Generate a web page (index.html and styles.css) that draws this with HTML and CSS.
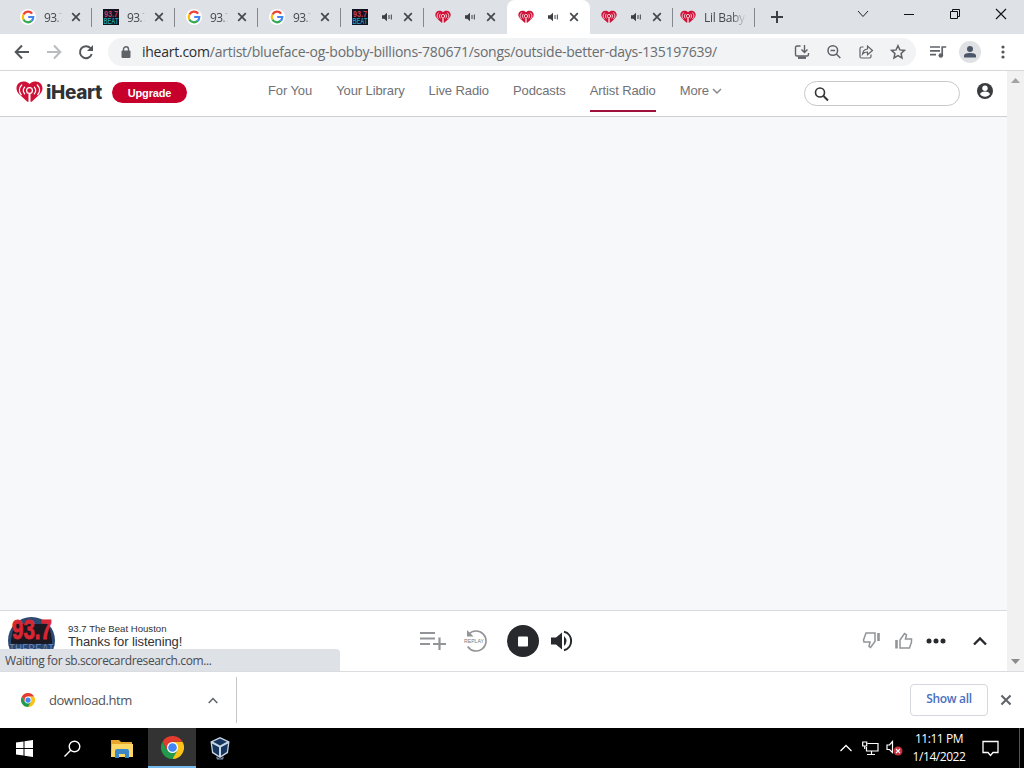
FILE: index.html
```html
<!DOCTYPE html>
<html lang="en">
<head>
    <meta charset="UTF-8">
    <title>iHeart</title>
    <link rel="stylesheet" href="styles.css">
</head>
<body>
    <svg class="sprite">
        <symbol id="google" viewBox="0 0 16 16">
            <circle cx="8" cy="8" r="8" fill="#fff"/>
            <g fill="none" stroke-width="2.2">
                <path d="M12.2 4.6A5.3 5.3 0 0 0 3.4 5.5" stroke="#ea4335"/>
                <path d="M3.4 5.5a5.3 5.3 0 0 0 0 5" stroke="#fbbc05"/>
                <path d="M3.4 10.5a5.3 5.3 0 0 0 8.2 1.4" stroke="#34a853"/>
                <path d="M11.6 11.9A5.3 5.3 0 0 0 13.3 8H8.2" stroke="#4285f4"/>
            </g>
        </symbol>
        <symbol id="beat" viewBox="0 0 16 16">
            <path d="M0 0h16v16H0z" fill="#10131f"/>
            <text x="1" y="7.5" font-size="8.5" textLength="14" lengthAdjust="spacingAndGlyphs" font-family="Liberation Sans" font-weight="bold" fill="#c8405c">93.7</text>
            <text x=".5" y="14.8" font-size="8.5" textLength="15" lengthAdjust="spacingAndGlyphs" font-family="Liberation Sans" font-weight="bold" fill="#1f93a8">BEAT</text>
        </symbol>
        <symbol id="heart" viewBox="0 0 27 22">
            <path d="M13.5 3C11.5 1 9.6.5 7.4.5 3.3.5.5 3.5.5 7.4c0 3 1.8 5 3.8 6.8l7 6.500h4.400l7-6.500c2-1.800 3.800-3.800 3.800-6.800C26.500 3.500 23.700.5 19.600.5c-2.200 0-4.100.5-6.100 2.500z" fill="#cf1137"/>
            <g fill="none" stroke="#fff" stroke-width="1.200" stroke-linecap="round">
                <circle cx="13.500" cy="9.500" r="2.900"/>
                <path d="M8.700 6.200c-1.700 2-1.700 4.700 0 6.700M5.700 4c-3 3-3 7.200-.4 9.700M18.300 6.200c1.700 2 1.700 4.700 0 6.700M21.300 4c3 3 3 7.200.4 9.700"/>
                <path d="M13.500 13v8.500" stroke-width="2" stroke-linecap="butt"/>
            </g>
        </symbol>
        <symbol id="audio" viewBox="0 0 12 10">
            <path d="M1 3.300h2.200L6 .8v8.400L3.200 6.700H1z" fill="#3c4043"/>
            <path d="M8 3v4M10.300 2.500v5" stroke="#3c4043" stroke-width="1"/>
        </symbol>
        <symbol id="close" viewBox="0 0 10 10">
            <path d="M1.200 1.200l7.600 7.600M8.800 1.200L1.200 8.800" stroke="currentColor" stroke-width="1.700"/>
        </symbol>
        <symbol id="chrome" viewBox="0 0 24 24">
            <path d="M12 12V6h10.400A12 12 0 0 1 12 24z" fill="#fbc116"/>
            <path d="M12 12l5.200 3L12 24A12 12 0 0 1 1.600 6l5.200 9z" fill="#229a4b"/>
            <path d="M1.600 6A12 12 0 0 1 22.400 6H12L6.800 15z" fill="#e33b2e"/>
            <circle cx="12" cy="12" r="5.800" fill="#fff"/>
            <circle cx="12" cy="12" r="4.500" fill="#4285f4"/>
        </symbol>
    </svg>

    <div class="tab-strip">
        <div class="tab"><svg class="favicon"><use href="#google"/></svg><span class="tab-title">93.7</span><svg class="tab-close"><use href="#close"/></svg></div>
        <div class="tab"><svg class="favicon"><use href="#beat"/></svg><span class="tab-title">93.7</span><svg class="tab-close"><use href="#close"/></svg></div>
        <div class="tab"><svg class="favicon"><use href="#google"/></svg><span class="tab-title">93.7</span><svg class="tab-close"><use href="#close"/></svg></div>
        <div class="tab"><svg class="favicon"><use href="#google"/></svg><span class="tab-title">93.7</span><svg class="tab-close"><use href="#close"/></svg></div>
        <div class="tab"><svg class="favicon"><use href="#beat"/></svg><svg class="tab-audio"><use href="#audio"/></svg><svg class="tab-close"><use href="#close"/></svg></div>
        <div class="tab no-line"><svg class="favicon"><use href="#heart"/></svg><svg class="tab-audio"><use href="#audio"/></svg><svg class="tab-close"><use href="#close"/></svg></div>
        <div class="tab active"><svg class="favicon"><use href="#heart"/></svg><svg class="tab-audio"><use href="#audio"/></svg><svg class="tab-close"><use href="#close"/></svg></div>
        <div class="tab"><svg class="favicon"><use href="#heart"/></svg><svg class="tab-audio"><use href="#audio"/></svg><svg class="tab-close"><use href="#close"/></svg></div>
        <div class="tab last"><svg class="favicon"><use href="#heart"/></svg><span class="tab-title long">Lil Baby</span></div>
        <svg class="new-tab" viewBox="0 0 12 12"><path d="M6 0v12M0 6h12" stroke="#3c4043" stroke-width="2"/></svg>
        <div class="window-buttons">
            <svg width="12" height="12"><path d="M1 3l5 5.500L11 3" fill="none" stroke="#222"/></svg>
            <svg width="12" height="12"><path d="M1 6.500h10" stroke="#111"/></svg>
            <svg width="12" height="12"><path d="M1.500 3.500h7v7h-7zM3.500 3.500v-2h7v7h-2" fill="none" stroke="#111"/></svg>
            <svg width="12" height="12"><path d="M1 1l10 10M11 1L1 11" stroke="#111" stroke-width="1.100"/></svg>
        </div>
    </div>

    <div class="toolbar">
        <div class="nav-buttons">
            <svg width="16" height="16"><path d="M15 8H2M8 1.500L1.700 8 8 14.500" fill="none" stroke="#54575a" stroke-width="2"/></svg>
            <svg width="16" height="16"><path d="M1 8h13M8 1.500L14.300 8 8 14.500" fill="none" stroke="#bbbcbe" stroke-width="2"/></svg>
            <svg width="16" height="16"><path d="M13.700 10A6 6 0 1 1 12.500 4.200" fill="none" stroke="#54575a" stroke-width="2"/><path d="M15 1v6H9z" fill="#54575a"/></svg>
        </div>
        <div class="address">
            <svg class="lock" viewBox="0 0 10 12"><rect x=".5" y="4.500" width="9" height="7.500" rx="1" fill="#5f6368"/><path d="M2.500 5V3.300a2.500 2.500 0 0 1 5 0V5" fill="none" stroke="#5f6368" stroke-width="1.400"/></svg>
            <div class="url"><span>iheart.com</span>/artist/blueface-og-bobby-billions-780671/songs/outside-better-days-135197639/</div>
            <div class="address-icons">
                <svg width="16" height="16" fill="none" stroke="#5f6368" stroke-width="1.400"><path d="M6.500 2H3Q1.500 2 1.500 3.500v7Q1.500 12 3 12h10q1.500 0 1.500-1.500V9M10.500 1v7M7.500 5.500l3 3 3-3"/><path d="M4 13.700h8" stroke-width="2.400"/></svg>
                <svg width="16" height="16" fill="none" stroke="#5f6368" stroke-width="1.500"><circle cx="6.800" cy="6.500" r="4.800"/><path d="M4.500 6.500h4.600M10.300 10l4 4"/></svg>
                <svg width="16" height="16" fill="none" stroke="#5f6368" stroke-width="1.200"><path d="M5.500 3H3.500Q2 3 2 4.500v8Q2 14 3.500 14h8q1.500 0 1.500-1.500v-2M4.500 10c.5-3.500 2.500-4.800 5-5V2l5 4.500-5 4.300V8c-2.300 0-3.700.5-5 2z"/></svg>
                <svg width="16" height="16"><path d="M8 1.700l1.900 4.200 4.500.5-3.300 3.100.9 4.500-4-2.300L4 14l.9-4.500-3.300-3.100 4.500-.5z" fill="none" stroke="#5f6368" stroke-width="1.500"/></svg>
            </div>
        </div>
        <svg class="queue" width="18" height="16"><path d="M1 3h10M1 6.800h10M1 10.600h6M13.200 12V3h4" fill="none" stroke="#5f6368" stroke-width="1.700"/><circle cx="11.800" cy="11.500" r="2.300" fill="#5f6368"/></svg>
        <svg class="profile" width="22" height="22"><circle cx="11" cy="11" r="11" fill="#dfe1e5"/><circle cx="11" cy="8" r="3" fill="#4b5768"/><path d="M5 16.500v-2c0-3.300 12-3.300 12 0v2z" fill="#4b5768"/></svg>
        <svg class="menu" width="4" height="16" fill="#54575a"><circle cx="2" cy="3" r="1.600"/><circle cx="2" cy="8" r="1.600"/><circle cx="2" cy="13" r="1.600"/></svg>
    </div>

    <div class="viewport">
        <div class="page">
            <header class="site-header">
                <svg class="logo-heart"><use href="#heart"/></svg>
                <div class="logo-text">iHeart</div>
                <button class="upgrade">Upgrade</button>
                <nav class="site-nav">
                    <a>For You</a>
                    <a>Your Library</a>
                    <a>Live Radio</a>
                    <a>Podcasts</a>
                    <a class="current">Artist Radio</a>
                    <a>More <svg width="10" height="7"><path d="M1 1l4 4 4-4" fill="none" stroke="#888" stroke-width="1.500"/></svg></a>
                </nav>
                <div class="search">
                    <svg width="16" height="16" fill="none" stroke="#333" stroke-width="1.600"><circle cx="6" cy="6.500" r="4.500"/><path d="M9.500 10l4.500 4.500" stroke-width="1.900"/></svg>
                </div>
                <svg class="account" viewBox="0 0 16 16"><circle cx="8" cy="8" r="8" fill="#3a3c3f"/><circle cx="8" cy="5.300" r="2.700" fill="#fff"/><path d="M3 11c1.500-3.300 8.500-3.300 10 0-2 3.500-8 3.500-10 0z" fill="#fff"/></svg>
            </header>
            <main class="content"></main>
            <footer class="player">
                <svg class="cover" viewBox="0 0 47 47">
                    <circle cx="23.500" cy="23.500" r="23.500" fill="#2b4a73"/>
                    <path d="M6 7h35l3 16v4H3v-4z" fill="#1a1922"/>
                    <g font-family="Liberation Sans" font-weight="bold">
                        <text x="4" y="22" font-size="27" textLength="40" lengthAdjust="spacingAndGlyphs" fill="#d92632" stroke="#d92632" stroke-width=".8">93.7</text>
                        <text x="1" y="37" font-size="15" textLength="45" lengthAdjust="spacingAndGlyphs" fill="#7f9fce" stroke="#16305c" stroke-width=".7">THEBEAT</text>
                    </g>
                </svg>
                <div class="track">
                    <div class="station">93.7 The Beat Houston</div>
                    <div class="song">Thanks for listening!</div>
                </div>
                <div class="controls">
                    <svg width="28" height="22"><path d="M1 3h15M1 8.500h15M1 14h10M14 14h13M20.500 7.500V20" stroke="#929497" stroke-width="2.200"/></svg>
                    <svg class="replay" width="24" height="24"><path d="M4.500 5.500A10 10 0 1 1 3.700 17.500" fill="none" stroke="#929497" stroke-width="1.600"/><path d="M3 1v6.500h6.500z" fill="#929497"/><path d="M0 8.500h20v7H0z" fill="#fff"/><text x="0" y="14" font-family="Liberation Sans" font-size="5.500" textLength="20" lengthAdjust="spacingAndGlyphs" fill="#77797c">REPLAY</text></svg>
                    <svg class="stop" width="32" height="32"><circle cx="16" cy="16" r="16" fill="#27292d"/><rect x="11" y="11.500" width="10" height="10" rx="1" fill="#fff"/></svg>
                    <svg class="volume" width="22" height="22"><path d="M0 7.500h5l6-5v17l-6-5H0z" fill="#27292d"/><path d="M13 6q5 5 0 10z" fill="#27292d"/><path d="M13 1.800c9.500 2 9.500 16.400 0 18.400" fill="none" stroke="#27292d" stroke-width="2"/></svg>
                </div>
                <div class="feedback">
                    <svg width="20" height="20" fill="none" stroke="#929497" stroke-width="1.500"><path d="M13 2v8.500l-4.500 6-1.500-1 1-4.500H2L1.500 9l2.500-7z"/><path d="M16.500 2v8" stroke-width="2.600"/></svg>
                    <svg width="20" height="20" fill="none" stroke="#929497" stroke-width="1.500"><path d="M6 17V9l4.500-6.500 2 1.300-1 4.200h6v3l-2 6z"/><path d="M2.500 9v8.500" stroke-width="2.600"/></svg>
                    <svg width="20" height="20" fill="#27292d"><circle cx="3" cy="10" r="2.500"/><circle cx="10" cy="10" r="2.500"/><circle cx="17" cy="10" r="2.500"/></svg>
                    <svg class="expand" width="14" height="10"><path d="M1 8.500l6-6 6 6" fill="none" stroke="#27292d" stroke-width="2.400"/></svg>
                </div>
            </footer>
            <div class="status-bubble"><span>Waiting for sb.scorecardresearch.com...</span></div>
        </div>
        <div class="scrollbar">
            <svg width="9" height="5"><path d="M0 5l4.500-5L9 5z" fill="#a3a3a3"/></svg>
            <svg width="9" height="5"><path d="M0 0l4.500 5L9 0z" fill="#8b8b8b"/></svg>
        </div>
    </div>

    <div class="downloads">
        <div class="download-item">
            <svg width="14" height="14"><use href="#chrome"/></svg>
            <span class="file-name">download.htm</span>
            <svg class="item-caret" width="10" height="7"><path d="M.7 6L5 1.500 9.300 6" fill="none" stroke="#5f6368" stroke-width="1.500"/></svg>
        </div>
        <button class="show-all">Show all</button>
        <svg class="downloads-close" width="12" height="12"><use href="#close"/></svg>
    </div>

    <div class="taskbar">
        <div class="task"><svg width="17" height="17" fill="#fff"><path d="M0 2.500l7.500-1V8H0zM8.500 1.300L17 0v8H8.500zM0 9h7.500v6.500l-7.500-1zM8.500 9H17v8l-8.500-1.300z"/></svg></div>
        <div class="task"><svg width="17" height="17" fill="none" stroke="#fff" stroke-width="1.400"><circle cx="10.500" cy="6.500" r="5.300"/><path d="M6.700 10.300L.5 16.500"/></svg></div>
        <div class="task explorer"><svg width="22" height="19"><path d="M0 1h8l2 2h11v15H0z" fill="#e8a72c"/><path d="M1 5h21v13H0z" fill="#ffd767"/><path d="M4 19v-7q0-2 2-2h10q2 0 2 2v7h-4v-4H8v4z" fill="#3b88c8"/></svg></div>
        <div class="task running"><svg width="23" height="23"><use href="#chrome"/></svg></div>
        <div class="task"><svg width="20" height="23"><path d="M10 0l9.500 4.500L18 16l-8 5-8-5L.5 4.500z" fill="#c9d6e6"/><path d="M10 1.500l7 3.200L10 8.500 3 4.700zM2 6.500l7 3.800v8.500L3.200 15zM18 6.500l-7 3.800v8.500l5.800-3.800z" fill="#17365d"/><path d="M6 19.500l4 2.300 4-2.300-1 3H7z" fill="#7b8fab"/></svg></div>
        <div class="tray">
            <svg width="12" height="8"><path d="M.5 7L6 1.500 11.500 7" fill="none" stroke="#fff" stroke-width="1.300"/></svg>
            <svg class="network" width="17" height="15" fill="none" stroke="#fff" stroke-width="1.200"><path d="M5.500 2.500H16v7.500H4.500V6M9.500 10v3.500M5 13.500h8M.7 1h4v4h-4zM2.700 5v3"/></svg>
            <svg class="muted" width="18" height="16"><path d="M1 5h2.500L6.500 1.500v11L3.500 9.500H1z" fill="none" stroke="#fff" stroke-width="1.200"/><circle cx="12" cy="11" r="4.500" fill="#c9303c"/><path d="M10 9l4 4M14 9l-4 4" stroke="#fff" stroke-width="1.100"/></svg>
            <div class="clock"><div class="time">11:11 PM</div><div class="date">1/14/2022</div></div>
            <svg class="notice" width="17" height="17"><path d="M1 1.500h15v11h-5l-2.500 3-2.500-3H1z" fill="none" stroke="#fff" stroke-width="1.300"/></svg>
        </div>
        <div class="show-desktop"></div>
    </div>
</body>
</html>
```
FILE: styles.css
```css
* {
    box-sizing: border-box;
}

body {
    margin: 0;
    width: 1024px;
    height: 768px;
    overflow: hidden;
    display: flex;
    flex-direction: column;
    font-family: "Open Sans", "Noto Sans", sans-serif;
    background: #fff;
}

svg {
    display: block;
    flex: none;
}

.sprite {
    position: absolute;
    width: 0;
    height: 0;
}

/* Tabs */
.tab-strip {
    display: flex;
    height: 34px;
    padding-left: 9px;
    background: #dee1e6;
    color: #45484c;
}

.tab {
    position: relative;
    display: flex;
    align-items: center;
    width: 83px;
    height: 34px;
    padding-left: 11px;
    flex: none;
}

.tab::after {
    content: "";
    position: absolute;
    right: 0;
    top: 8px;
    width: 1px;
    height: 19px;
    background: #85888d;
}

.tab.no-line::after,
.tab.active::after {
    display: none;
}

.tab.active {
    background: #fff;
    border-radius: 8px 8px 0 0;
}

.tab.last {
    width: 82px;
    padding-left: 7px;
}

.favicon {
    width: 16px;
    height: 16px;
}

.tab-title {
    width: 18px;
    margin-left: 8px;
    overflow: hidden;
    white-space: nowrap;
    font-size: 12px;
    letter-spacing: -0.6px;
    -webkit-mask-image: linear-gradient(to right, #000 65%, transparent);
    mask-image: linear-gradient(to right, #000 65%, transparent);
}

.tab-title.long {
    width: 42px;
    letter-spacing: -0.3px;
}

.tab-audio {
    width: 12px;
    height: 10px;
    margin-left: 13px;
}

.tab-close {
    width: 10px;
    height: 10px;
    margin-left: auto;
    margin-right: 11px;
}

.new-tab {
    width: 12px;
    height: 12px;
    margin: 11px 0 0 16px;
}

.window-buttons {
    display: flex;
    gap: 34px;
    margin: 8px 17px 0 auto;
}

/* Toolbar */
.toolbar {
    display: flex;
    align-items: center;
    height: 37px;
    border-bottom: 1px solid #d5d7da;
}

.nav-buttons {
    display: flex;
    gap: 16px;
    padding-left: 14px;
}

.address {
    display: flex;
    align-items: center;
    width: 808px;
    height: 28px;
    margin-left: 14px;
    padding: 0 10px 0 13px;
    border-radius: 14px;
    background: #f1f3f4;
}

.lock {
    width: 10px;
    height: 12px;
}

.url {
    margin-left: 11px;
    white-space: nowrap;
    font-size: 14px;
    line-height: 26px;
    letter-spacing: -0.25px;
    color: #6a6d71;
}

.url span {
    color: #2c2e31;
}

.address-icons {
    display: flex;
    gap: 16px;
    margin-left: auto;
}

.queue {
    margin-left: 13px;
}

.profile {
    margin-left: 12px;
}

.menu {
    margin-left: 20px;
}

/* Page */
.viewport {
    display: flex;
    height: 600px;
}

.page {
    position: relative;
    display: flex;
    flex-direction: column;
    width: 1007px;
}

.site-header {
    display: flex;
    height: 46px;
    padding-left: 16px;
    border-bottom: 1px solid #cdcfd1;
}

.logo-heart {
    width: 27px;
    height: 22px;
    margin-top: 10px;
}

.logo-text {
    width: 59px;
    margin: 6px 0 0 3px;
    font-family: Inter, sans-serif;
    font-size: 19px;
    font-weight: 800;
    line-height: 31px;
    letter-spacing: -0.35px;
    color: #303235;
}

.upgrade {
    width: 75px;
    height: 21px;
    margin: 11px 0 0 7px;
    padding: 0;
    border: none;
    border-radius: 11px;
    background: #c6002b;
    color: #fff;
    font: bold 11px "Liberation Sans", sans-serif;
    letter-spacing: -0.15px;
}

.site-nav {
    display: flex;
    gap: 24px;
    margin-left: 81px;
    font-family: "Liberation Sans", sans-serif;
    font-size: 13px;
    line-height: 40px;
    letter-spacing: -0.1px;
    color: #717277;
}

.site-nav a {
    height: 41px;
    white-space: nowrap;
}

.site-nav .current {
    border-bottom: 2px solid #a0103d;
}

.site-nav svg {
    display: inline-block;
}

.search {
    width: 156px;
    height: 25px;
    margin: 10px 17px 0 auto;
    padding: 4px 0 0 9px;
    border: 1px solid #c7c8ca;
    border-radius: 13px;
}

.account {
    width: 16px;
    height: 16px;
    margin: 12px 14px 0 0;
}

.content {
    flex: 1;
    background: #f6f8f9;
}

.player {
    display: flex;
    height: 61px;
    padding-left: 8px;
    border-top: 1px solid #d9dbde;
}

.cover {
    width: 47px;
    height: 47px;
    margin-top: 6px;
}

.track {
    width: 351px;
    margin: 12px 0 0 13px;
    font-family: "Liberation Sans", sans-serif;
    color: #303235;
}

.station {
    font-size: 9.6px;
    line-height: 12px;
}

.song {
    font-size: 13px;
    line-height: 14px;
    letter-spacing: -0.1px;
}

.controls {
    display: flex;
    align-items: center;
}

.replay {
    margin-left: 17px;
}

.stop {
    margin-left: 19px;
}

.volume {
    margin-left: 12px;
}

.feedback {
    display: flex;
    align-items: center;
    gap: 12px;
    margin-left: auto;
    padding-right: 20px;
}

.expand {
    margin-left: 15px;
}

.status-bubble {
    position: absolute;
    left: 0;
    bottom: 0;
    width: 340px;
    height: 22px;
    padding-left: 5px;
    border-radius: 0 4px 0 0;
    background: #dee1e6;
    font-size: 12px;
    line-height: 24px;
    letter-spacing: -0.37px;
    color: #484b50;
}

.scrollbar {
    display: flex;
    flex-direction: column;
    justify-content: space-between;
    align-items: center;
    width: 17px;
    padding: 7px 0;
    background: #f1f1f1;
}

/* Downloads */
.downloads {
    display: flex;
    height: 57px;
    align-items: center;
    border-top: 1px solid #dadce0;
}

.download-item {
    display: flex;
    align-items: center;
    width: 237px;
    height: 46px;
    padding-left: 21px;
    border-right: 1px solid #c4c6c9;
}

.file-name {
    margin-left: 14px;
    font-size: 13px;
    letter-spacing: -0.45px;
    color: #505256;
}

.item-caret {
    margin: 0 18px 0 auto;
}

.show-all {
    width: 78px;
    height: 32px;
    margin-left: auto;
    padding: 0 0 3px;
    border: 1px solid #d5d8dc;
    border-radius: 4px;
    background: #fff;
    font: 600 12px "Open Sans", sans-serif;
    letter-spacing: -0.3px;
    color: #4a70c0;
}

.downloads-close {
    margin: 0 12px;
    color: #5f6368;
}

/* Taskbar */
.taskbar {
    display: flex;
    height: 40px;
    background: #000;
}

.task {
    display: flex;
    justify-content: center;
    align-items: center;
    width: 48px;
}

.task.explorer {
    width: 52px;
}

.task.running {
    background: #333;
    border-bottom: 2px solid #76b9ed;
}

.tray {
    display: flex;
    align-items: center;
    margin-left: auto;
    padding-right: 20px;
}

.show-desktop {
    width: 5px;
    border-left: 1px solid #555;
}

.network {
    margin-left: 10px;
}

.muted {
    margin-left: 7px;
}

.clock {
    width: 60px;
    margin-left: 5px;
    font-size: 12px;
    line-height: 18px;
    letter-spacing: -0.45px;
    text-align: center;
    white-space: nowrap;
    color: #fff;
}

.notice {
    margin-left: 13px;
}
```
